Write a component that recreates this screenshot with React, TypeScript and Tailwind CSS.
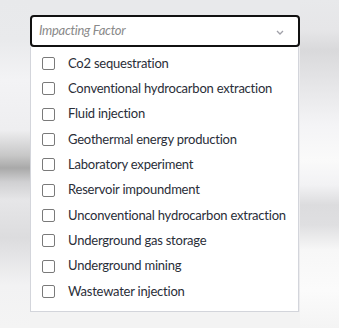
import React from "react";

const items = [
  "Co2 sequestration",
  "Conventional hydrocarbon extraction",
  "Fluid injection",
  "Geothermal energy production",
  "Laboratory experiment",
  "Reservoir impoundment",
  "Unconventional hydrocarbon extraction",
  "Underground gas storage",
  "Underground mining",
  "Wastewater injection",
];

export default function App() {
  return (
    <div
      className="flex w-[339px] h-[328px] overflow-hidden bg-[#ececee]"
      style={{ fontFamily: "Lato, 'Noto Sans', sans-serif" }}
    >
      <div className="w-[30px] h-full bg-[linear-gradient(to_bottom,#e8e9eb_0px,#e9eaec_40px,#f3f3f5_80px,#eeeef0_130px,#c8c8c8_155px,#a9a9a9_168px,#d0d0d2_182px,#e6e6e8_200px,#dcdcde_238px,#e4e4e6_255px,#f2f2f3_285px,#f4f4f4_328px)]" />
      <div className="flex flex-col w-[270px] h-full">
        <div className="h-[15px] bg-[#e8e9eb]" />
        <div className="h-[32px] bg-white border-2 border-[#111] rounded-[4px] flex items-center justify-between pl-[7px] pr-[14px]">
          <span className="italic text-[13px] text-[#8a8a8a] tracking-[-0.3px]">Impacting Factor</span>
          <svg width="8" height="5" viewBox="0 0 8 5" className="mt-[2px]">
            <path d="M1 1 L4 4 L7 1" fill="none" stroke="#a0a0a8" strokeWidth="1.3" />
          </svg>
        </div>
        <div className="w-[269px] h-[265px] bg-white border border-[#d3d5db] border-t-0 flex flex-col pt-[4px]">
          {items.map((t) => (
            <div key={t} className="flex items-center h-[25.3px] shrink-0">
              <span className="ml-[11px] w-[13px] h-[13px] border-[1.5px] border-[#7a7a7a] rounded-[2px] bg-white shrink-0" />
              <span className="ml-[13px] text-[13px] text-[#2a2e38] whitespace-nowrap tracking-[-0.22px]">{t}</span>
            </div>
          ))}
        </div>
        <div className="flex-1 bg-[#f3f3f3]" />
      </div>
      <div className="flex-1 h-full bg-[linear-gradient(to_bottom,#e8e9eb_0px,#e6e6e8_30px,#d9d9db_50px,#e4e4e6_80px,#f4f4f6_125px,#fafafa_160px,#f2f2f4_185px,#dcdcde_205px,#dfdfe1_225px,#f7f7f7_250px,#fbfbfb_290px,#f4f4f4_328px)]" />
    </div>
  );
}
